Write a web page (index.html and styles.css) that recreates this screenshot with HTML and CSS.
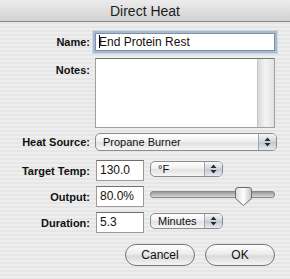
FILE: index.html
```html
<!DOCTYPE html>
<html lang="en">
<head>
    <meta charset="UTF-8">
    <title>Direct Heat</title>
    <link rel="stylesheet" href="styles.css">
</head>
<body>
    <div class="window">
        <div class="titlebar">Direct Heat</div>

        <div class="form">
            <div class="row row-name">
                <label>Name:</label>
                <div class="field focus"><span class="caret"></span>End Protein Rest</div>
            </div>

            <div class="row row-notes">
                <label>Notes:</label>
                <div class="notes"><div class="scroll"></div></div>
            </div>

            <div class="row row-heat">
                <label>Heat Source:</label>
                <div class="popup wide">
                    <span>Propane Burner</span>
                    <div class="arrows">
                        <svg width="7" height="10" viewBox="0 0 7 10"><path d="M3.5 0.5 L6.5 4 H0.5 Z M3.5 9.5 L6.5 6 H0.5 Z" fill="#2a2a2a"/></svg>
                    </div>
                </div>
            </div>

            <div class="row row-temp">
                <label>Target Temp:</label>
                <div class="field small">130.0</div>
                <div class="popup unit">
                    <span>&deg;F</span>
                    <div class="arrows">
                        <svg width="7" height="10" viewBox="0 0 7 10"><path d="M3.5 0.5 L6.5 4 H0.5 Z M3.5 9.5 L6.5 6 H0.5 Z" fill="#2a2a2a"/></svg>
                    </div>
                </div>
            </div>

            <div class="row row-output">
                <label>Output:</label>
                <div class="field small">80.0%</div>
                <div class="slider">
                    <div class="track"></div>
                    <svg class="thumb" width="19" height="21" viewBox="0 0 19 21">
                        <defs>
                            <linearGradient id="tg" x1="0" y1="0" x2="1" y2="0">
                                <stop offset="0" stop-color="#d9d9d9"/>
                                <stop offset="0.5" stop-color="#ffffff"/>
                                <stop offset="1" stop-color="#c4c4c4"/>
                            </linearGradient>
                        </defs>
                        <path d="M4 1.5 H15 Q17.5 1.5 17.5 4 V12.5 L9.5 19.5 L1.5 12.5 V4 Q1.5 1.5 4 1.5 Z" fill="url(#tg)" stroke="#6e6e6e" stroke-width="1"/>
                    </svg>
                </div>
            </div>

            <div class="row row-duration">
                <label>Duration:</label>
                <div class="field small">5.3</div>
                <div class="popup unit">
                    <span>Minutes</span>
                    <div class="arrows">
                        <svg width="7" height="10" viewBox="0 0 7 10"><path d="M3.5 0.5 L6.5 4 H0.5 Z M3.5 9.5 L6.5 6 H0.5 Z" fill="#2a2a2a"/></svg>
                    </div>
                </div>
            </div>

            <div class="buttons">
                <div class="button">Cancel</div>
                <div class="button">OK</div>
            </div>
        </div>
    </div>
</body>
</html>
```

FILE: styles.css
```css
body {
    margin: 0;
    font-family: "Liberation Sans", Arial, sans-serif;
    color: #111;
}

.window {
    width: 290px;
    height: 279px;
    overflow: hidden;
    background: repeating-linear-gradient(to bottom, #eeeeee 0, #eeeeee 2px, #e6e6e6 2px, #e6e6e6 4px);
}

.titlebar {
    height: 21px;
    line-height: 22px;
    border-bottom: 1px solid #8a8a8a;
    background: linear-gradient(#ececec, #d2d2d2);
    text-align: center;
    font-size: 14px;
    color: #1c1c1c;
}

.form {
    display: flex;
    flex-direction: column;
    padding: 11px 15px 0 0;
}

.row {
    display: flex;
    align-items: center;
    gap: 5px;
}

.row label {
    width: 90px;
    flex: none;
    text-align: right;
    font-weight: bold;
    font-size: 11px;
    color: #111;
}

.field {
    box-sizing: border-box;
    height: 18px;
    flex: 1;
    background: #fff;
    border: 1px solid #9a9a9a;
    border-top-color: #6e6e6e;
    font-size: 12px;
    line-height: 16px;
    padding: 0 3px;
    white-space: nowrap;
}

.field.focus {
    box-shadow: 0 0 0 2px #a8bad0, 0 0 0 3px #cdd6e1;
    border-color: #7d8ea5;
}

.caret {
    display: inline-block;
    width: 1px;
    height: 13px;
    background: #000;
    vertical-align: -2px;
    margin-right: -1px;
}

.field.small {
    flex: none;
    width: 48px;
    height: 21px;
    line-height: 19px;
    margin-left: 1px;
}

.row-notes {
    margin-top: 7px;
    align-items: flex-start;
}

.row-notes label {
    padding-top: 6px;
}

.notes {
    box-sizing: border-box;
    flex: 1;
    height: 70px;
    background: #fff;
    border: 1px solid #a0a0a0;
    border-top-color: #6f7a6f;
    display: flex;
    justify-content: flex-end;
}

.scroll {
    width: 16px;
    border-left: 1px solid #c4c4c4;
    background: linear-gradient(to right, #d8d8d8, #f4f4f4 45%, #e2e2e2);
}

.popup {
    box-sizing: border-box;
    height: 18px;
    border: 1px solid #8c8c8c;
    border-radius: 5px;
    background: linear-gradient(#ffffff, #f1f1f1 45%, #e2e2e2 55%, #f6f6f6);
    display: flex;
    align-items: center;
    font-size: 11px;
    overflow: hidden;
}

.popup span {
    flex: 1;
    padding-left: 7px;
}

.popup .arrows {
    width: 17px;
    align-self: stretch;
    border-left: 1px solid #a6a6a6;
    background: linear-gradient(#f4f6f9, #cfd5dd 50%, #c1c8d2 51%, #e6eaef);
    display: flex;
    align-items: center;
    justify-content: center;
}

.row-heat {
    margin-top: 5px;
}

.popup.wide {
    flex: 1;
    margin-right: -2px;
}

.popup.unit {
    width: 73px;
    height: 16px;
    margin-left: 1px;
    align-self: flex-start;
    margin-top: 1px;
}

.row-temp {
    margin-top: 9px;
}

.row-output {
    margin-top: 5px;
}

.row-duration {
    margin-top: 5px;
}

.slider {
    flex: 1;
    height: 21px;
    margin-left: 1px;
    position: relative;
    display: flex;
    align-items: center;
}

.track {
    flex: 1;
    height: 5px;
    border-radius: 3px;
    border: 1px solid #8a8a8a;
    background: linear-gradient(#9a9a9a, #d6d6d6);
    margin-top: -4px;
}

.thumb {
    position: absolute;
    left: 84px;
    top: 0;
}

.buttons {
    display: flex;
    justify-content: flex-end;
    gap: 10px;
    margin-top: 11px;
}

.button {
    box-sizing: border-box;
    width: 70px;
    height: 22px;
    border: 1px solid #777;
    border-radius: 11px;
    background: linear-gradient(#ffffff, #ececec 45%, #dadada 55%, #f4f4f4);
    text-align: center;
    font-size: 12px;
    line-height: 20px;
    color: #111;
}
```
